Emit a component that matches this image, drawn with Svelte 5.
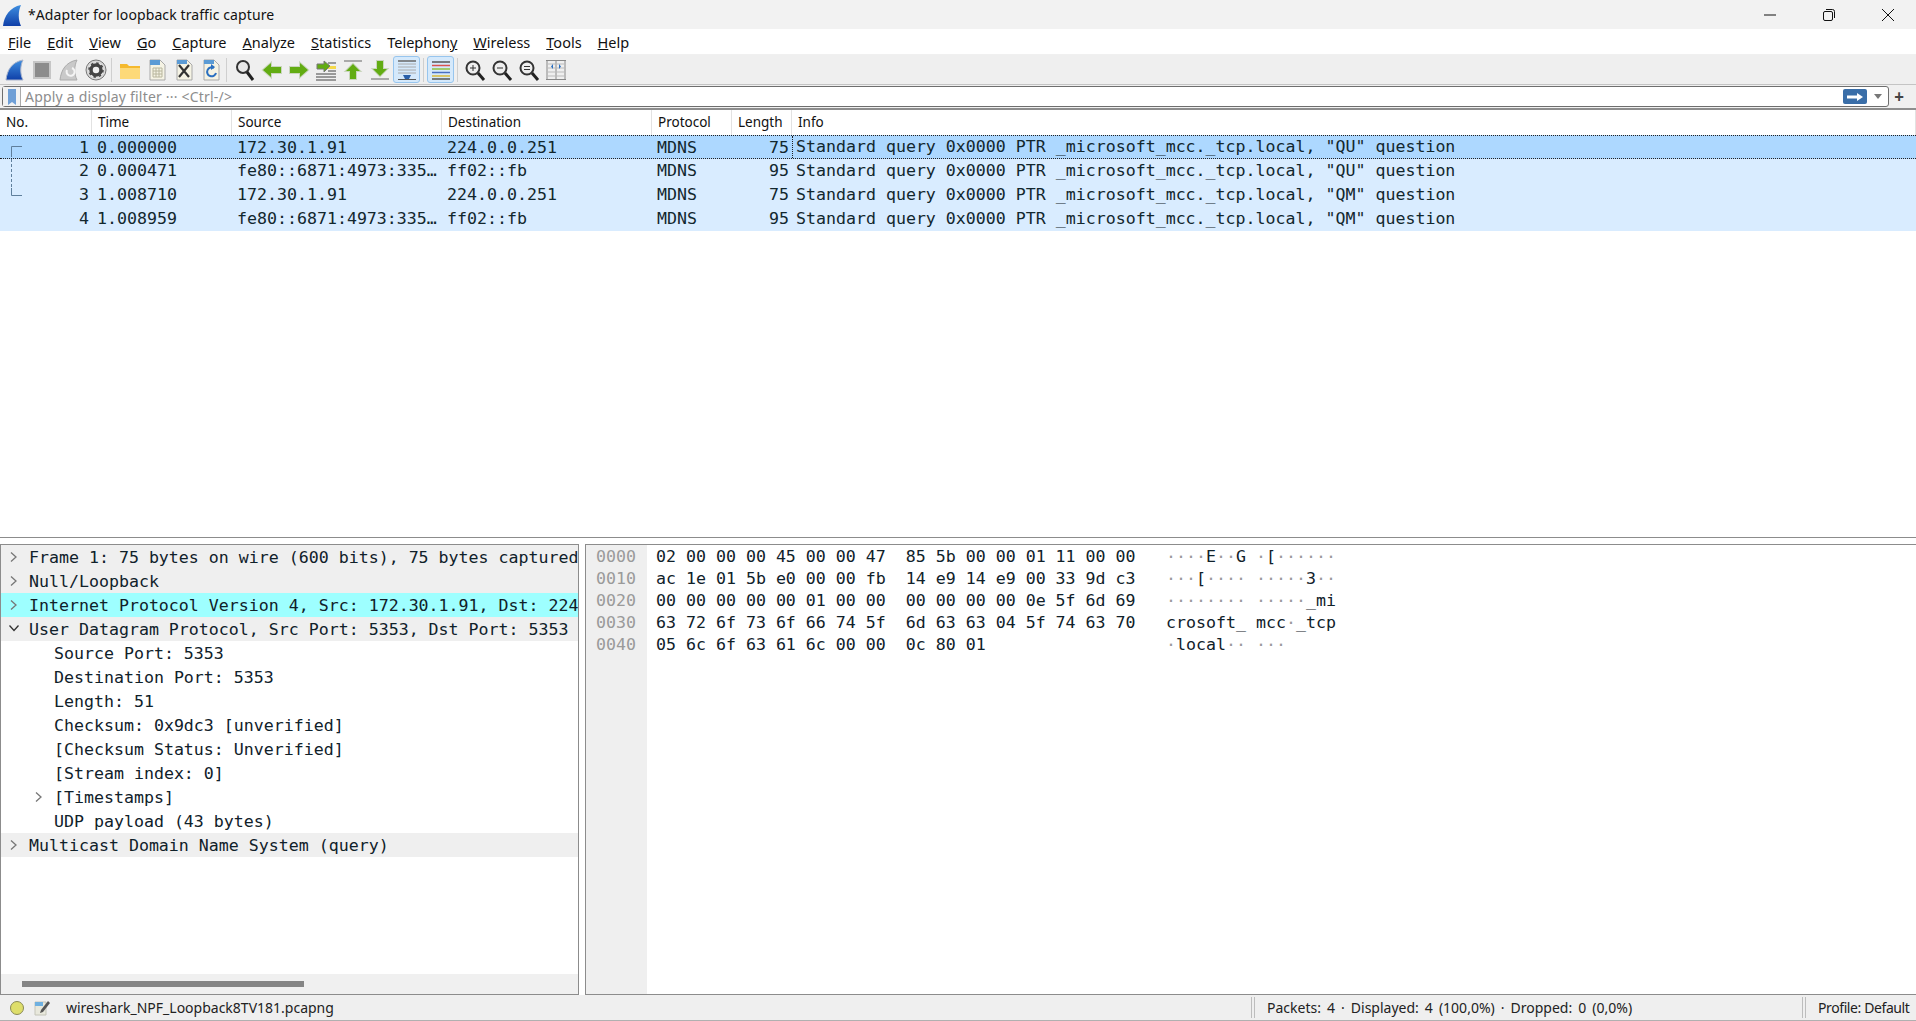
<script>
  const menus = [
    ["F", "ile"], ["E", "dit"], ["V", "iew"], ["G", "o"], ["C", "apture"], ["A", "nalyze"],
    ["S", "tatistics"], ["", "Telephon", "y"], ["W", "ireless"], ["T", "ools"], ["H", "elp"],
  ];

  const packets = [
    { no: 1, time: "0.000000", src: "172.30.1.91", dst: "224.0.0.251", len: 75, q: "QU" },
    { no: 2, time: "0.000471", src: "fe80::6871:4973:335…", dst: "ff02::fb", len: 95, q: "QU" },
    { no: 3, time: "1.008710", src: "172.30.1.91", dst: "224.0.0.251", len: 75, q: "QM" },
    { no: 4, time: "1.008959", src: "fe80::6871:4973:335…", dst: "ff02::fb", len: 95, q: "QM" },
  ];

  const tree = [
    { text: "Frame 1: 75 bytes on wire (600 bits), 75 bytes captured", top: true, arrow: "r" },
    { text: "Null/Loopback", top: true, arrow: "r" },
    { text: "Internet Protocol Version 4, Src: 172.30.1.91, Dst: 224", top: true, arrow: "r", hl: true },
    { text: "User Datagram Protocol, Src Port: 5353, Dst Port: 5353", top: true, arrow: "d" },
    { text: "Source Port: 5353" },
    { text: "Destination Port: 5353" },
    { text: "Length: 51" },
    { text: "Checksum: 0x9dc3 [unverified]" },
    { text: "[Checksum Status: Unverified]" },
    { text: "[Stream index: 0]" },
    { text: "[Timestamps]", arrow: "r" },
    { text: "UDP payload (43 bytes)" },
    { text: "Multicast Domain Name System (query)", top: true, arrow: "r" },
  ];

  const hex = [
    ["0000", "02 00 00 00 45 00 00 47  85 5b 00 00 01 11 00 00", "····E··G ·[······"],
    ["0010", "ac 1e 01 5b e0 00 00 fb  14 e9 14 e9 00 33 9d c3", "···[···· ·····3··"],
    ["0020", "00 00 00 00 00 01 00 00  00 00 00 00 0e 5f 6d 69", "········ ·····_mi"],
    ["0030", "63 72 6f 73 6f 66 74 5f  6d 63 63 04 5f 74 63 70", "crosoft_ mcc·_tcp"],
    ["0040", "05 6c 6f 63 61 6c 00 00  0c 80 01", "·local·· ···"],
  ];
</script>

<div class="window">
  <header class="titlebar">
    <svg class="app-icon" viewBox="0 0 20 24" width="20" height="24">
      <defs>
        <linearGradient id="fin" x1="0" y1="0" x2="0" y2="1">
          <stop offset="0" stop-color="#3f8fe0" />
          <stop offset="1" stop-color="#0f3fa8" />
        </linearGradient>
      </defs>
      <path d="M1 23C2 13 8 4 19 2c-3 6-3 15 0 21z" fill="url(#fin)" />
    </svg>
    <span class="title">*Adapter for loopback traffic capture</span>
    <div class="win-buttons">
      <svg viewBox="0 0 14 14" width="14" height="14"><path d="M1 7h12" stroke="#111" fill="none" /></svg>
      <svg viewBox="0 0 14 14" width="14" height="14">
        <rect x="1.500" y="3.500" width="9" height="9" rx="1.500" stroke="#111" fill="none" />
        <path d="M4 1.500h6.500a2 2 0 0 1 2 2V10" stroke="#111" fill="none" />
      </svg>
      <svg viewBox="0 0 14 14" width="14" height="14"><path d="M1 1l12 12M13 1L1 13" stroke="#111" fill="none" /></svg>
    </div>
  </header>

  <nav class="menubar">
    {#each menus as m}
      <span class="menu"><u>{m[0]}</u>{m[1]}{#if m[2]}<u>{m[2]}</u>{/if}</span>
    {/each}
  </nav>

  <div class="toolbar">
    <span class="tool"><svg viewBox="0 0 22 22"><path d="M2 21C3 11 8 3 19 1c-3 6-3 14 0 20z" fill="url(#fin)" stroke="#a9b4cc" /></svg></span>
    <span class="tool"><svg viewBox="0 0 22 22"><rect x="3" y="3" width="16" height="16" fill="#8c8c8c" stroke="#c6c6c6" stroke-width="2" /></svg></span>
    <span class="tool"><svg viewBox="0 0 22 22"><path d="M2 21C3 11 8 3 19 1c-3 6-3 14 0 20z" fill="#c9c9c9" stroke="#ababab" /><path d="M14 9a4 4 0 1 1-5 2" fill="none" stroke="#f4f4f4" stroke-width="2" /></svg></span>
    <span class="tool">
      <svg viewBox="0 0 22 22">
        <circle cx="11" cy="11" r="10" fill="#d8d8d8" stroke="#777" />
        <circle cx="11" cy="11" r="7.500" fill="#f0f0f0" />
        <circle cx="11" cy="11" r="5" fill="none" stroke="#444" stroke-width="3.500" />
        <circle cx="11" cy="11" r="7" fill="none" stroke="#444" stroke-width="1.500" stroke-dasharray="2.500 3" />
      </svg>
    </span>
    <span class="sep"></span>
    <span class="tool"><svg viewBox="0 0 22 22"><path d="M1 5h7l2 2h11v13H1z" fill="#f5b92d" /><path d="M1 9h20v11H1z" fill="#fdd978" /></svg></span>
    <span class="tool">
      <svg viewBox="0 0 22 22">
        <path d="M4 1h10l5 5v15H4z" fill="#f5f3e4" stroke="#a9a9a9" />
        <path d="M4 1h10v5H4z" fill="#5b9bd5" />
        <path d="M7 9h9v9H7zM7 12h9M7 15h9M10 9v9M13 9v9" fill="none" stroke="#b8b69d" />
      </svg>
    </span>
    <span class="tool">
      <svg viewBox="0 0 22 22">
        <path d="M4 1h10l5 5v15H4z" fill="#f5f3e4" stroke="#a9a9a9" />
        <path d="M4 1h10v4H4z" fill="#5b9bd5" />
        <path d="M6 6l10 12M16 6L6 18" stroke="#333" stroke-width="2.200" />
      </svg>
    </span>
    <span class="tool">
      <svg viewBox="0 0 22 22">
        <path d="M4 1h10l5 5v15H4z" fill="#f5f3e4" stroke="#a9a9a9" />
        <path d="M4 1h10v4H4z" fill="#5b9bd5" />
        <path d="M14 9a4.500 4.500 0 1 0 2 5" fill="none" stroke="#2a6fc0" stroke-width="2" />
        <path d="M11 5l4 3-4 3z" fill="#2a6fc0" />
      </svg>
    </span>
    <span class="sep"></span>
    <span class="tool"><svg viewBox="0 0 22 22"><circle cx="9" cy="8" r="6" fill="#e8e8e8" stroke="#333" stroke-width="2" /><path d="M13 13l6 8" stroke="#222" stroke-width="3" /></svg></span>
    <span class="tool"><svg viewBox="0 0 22 22"><path d="M2 11l8-7v4h10v6H10v4z" fill="#62ac12" stroke="#c9d6bc" stroke-width="2" paint-order="stroke" /></svg></span>
    <span class="tool"><svg viewBox="0 0 22 22"><path d="M20 11l-8-7v4H2v6h10v4z" fill="#62ac12" stroke="#c9d6bc" stroke-width="2" paint-order="stroke" /></svg></span>
    <span class="tool">
      <svg viewBox="0 0 22 22">
        <path d="M1 15h20M1 18h20M1 21h20M13 4h8M13 12h8" stroke="#444" />
        <path d="M13 7h8v3h-8z" fill="#f5d94a" />
        <path d="M15 7l-6-5v3H2v5h7v3z" fill="#62ac12" stroke="#777" />
      </svg>
    </span>
    <span class="tool">
      <svg viewBox="0 0 22 22"><path d="M2 2h18" stroke="#aaa" stroke-width="2" /><path d="M11 5l7 7h-4v8H8v-8H4z" fill="#62ac12" stroke="#c9d6bc" stroke-width="2" paint-order="stroke" /></svg>
    </span>
    <span class="tool">
      <svg viewBox="0 0 22 22"><path d="M2 20h18" stroke="#aaa" stroke-width="2" /><path d="M11 17l7-7h-4V2H8v8H4z" fill="#62ac12" stroke="#c9d6bc" stroke-width="2" paint-order="stroke" /></svg>
    </span>
    <span class="tool on">
      <svg viewBox="0 0 22 22">
        <path d="M2 2h18" stroke="#666" stroke-width="1.500" />
        <path d="M2 5h18M2 8h18M2 11h18M2 14h18" stroke="#aaa" />
        <path d="M2 20.500h18" stroke="#555" />
        <path d="M7 16h8l-2 4H9z" fill="#2a5fa8" />
      </svg>
    </span>
    <span class="sep narrow"></span>
    <span class="tool on">
      <svg viewBox="0 0 22 22">
        <path d="M2 3h18" stroke="#555" stroke-width="1.500" />
        <path d="M2 6.500h18" stroke="#d9534f" stroke-width="1.500" />
        <path d="M2 10h18" stroke="#8fbf3f" stroke-width="1.500" />
        <path d="M2 13.500h18" stroke="#4a6fc0" stroke-width="1.500" />
        <path d="M2 17h18" stroke="#d8b83a" stroke-width="1.500" />
        <path d="M2 20h18" stroke="#555" stroke-width="1.500" />
      </svg>
    </span>
    <span class="sep narrow"></span>
    <span class="tool"><svg viewBox="0 0 22 22"><circle cx="9" cy="9" r="6.500" fill="#eee" stroke="#333" stroke-width="2" /><path d="M14 14l6 7" stroke="#222" stroke-width="3" /><path d="M6 9h6M9 6v6" stroke="#333" /></svg></span>
    <span class="tool"><svg viewBox="0 0 22 22"><circle cx="9" cy="9" r="6.500" fill="#eee" stroke="#333" stroke-width="2" /><path d="M14 14l6 7" stroke="#222" stroke-width="3" /><path d="M6 9h6" stroke="#333" /></svg></span>
    <span class="tool"><svg viewBox="0 0 22 22"><circle cx="9" cy="9" r="6.500" fill="#eee" stroke="#333" stroke-width="2" /><path d="M14 14l6 7" stroke="#222" stroke-width="3" /><path d="M6 7.500h6M6 10.500h6" stroke="#333" /></svg></span>
    <span class="tool">
      <svg viewBox="0 0 22 22">
        <path d="M1 1.500h20M1 20.500h20M2 1v20M20 1v20M11 1v20" stroke="#888" />
        <path d="M1 5h20M1 9h20M1 13h20M1 17h20" stroke="#bbb" />
        <path d="M8 5v5l-2-2.500zM14 5v5l2-2.500z" fill="#2a6fc0" />
      </svg>
    </span>
  </div>

  <div class="filterbar">
    <div class="filter">
      <span class="bookmark">
        <svg viewBox="0 0 10 16" width="10" height="16"><path d="M1 0h8v16l-4-3-4 3z" fill="#6f9fd6" /></svg>
      </span>
      <span class="placeholder">Apply a display filter ··· &lt;Ctrl-/&gt;</span>
      <span class="go">
        <svg viewBox="0 0 24 14" width="24" height="14"><path d="M4 5.500h10V3l6 4-6 4V8.500H4z" fill="#fff" /></svg>
      </span>
      <span class="caret"></span>
    </div>
    <span class="plus">+</span>
  </div>

  <section class="packets">
    <div class="cols head">
      <span>No.</span><span>Time</span><span>Source</span><span>Destination</span><span>Protocol</span><span>Length</span><span>Info</span>
    </div>
    <div class="rows">
      {#each packets as p, i}
        <div class="cols row" class:sel={i === 0}>
          <span class="num">{p.no}</span>
          <span>{p.time}</span>
          <span>{p.src}</span>
          <span>{p.dst}</span>
          <span>MDNS</span>
          <span class="num">{p.len}</span>
          <span class="info">Standard query 0x0000 PTR _microsoft_mcc._tcp.local, "{p.q}" question</span>
        </div>
      {/each}
      <svg class="related" viewBox="0 0 12 50" width="12" height="50">
        <path d="M11 .5H.5V8M.5 42v7.500H11" fill="none" stroke="#5f7f9c" />
        <path d="M.5 8v34" fill="none" stroke="#5f7f9c" stroke-dasharray="3 2" />
      </svg>
    </div>
  </section>

  <div class="panes">
    <section class="details">
      <div class="tree">
        {#each tree as n}
          <div class="node" class:top={n.top} class:hl={n.hl}>
            <span class="arrow">
              {#if n.arrow === "r"}
                <svg viewBox="0 0 10 12" width="10" height="12"><path d="M3 1.500L8 6l-5 4.500" fill="none" stroke="#777" stroke-width="1.300" /></svg>
              {:else if n.arrow === "d"}
                <svg viewBox="0 0 12 10" width="12" height="10"><path d="M1.500 2.500L6 7.500l4.500-5" fill="none" stroke="#333" stroke-width="1.300" /></svg>
              {/if}
            </span>
            <span class="label">{n.text}</span>
          </div>
        {/each}
      </div>
      <div class="hscroll"><div class="thumb"></div></div>
    </section>

    <section class="bytes">
      <div class="offsets">
        {#each hex as h}<div class="line">{h[0]}</div>{/each}
      </div>
      <div class="dump">
        {#each hex as h}
          <div class="line">
            <span class="hexpart">{h[1]}</span><span class="ascii">{#each h[2].split("") as c}{#if c === "·"}<i>·</i>{:else}{c}{/if}{/each}</span>
          </div>
        {/each}
      </div>
    </section>
  </div>

  <footer class="status">
    <svg class="led" viewBox="0 0 16 16" width="16" height="16"><circle cx="8" cy="8" r="6.500" fill="#dede6a" stroke="#8a8a55" /></svg>
    <svg class="note" viewBox="0 0 16 16" width="16" height="16">
      <path d="M1 2h11v13H1z" fill="#e8e8dc" stroke="#c4c4b8" />
      <path d="M1 2h8v4H1z" fill="#6fb0e0" />
      <path d="M14 1L7 10l-1 3 3-1 7-9z" fill="#555" />
    </svg>
    <span class="file">wireshark_NPF_Loopback8TV181.pcapng</span>
    <span class="grip first"></span>
    <span class="stats">Packets: 4 · Displayed: 4 (100,0%) · Dropped: 0 (0,0%)</span>
    <span class="grip"></span>
    <span class="profile">Profile: Default</span>
  </footer>
</div>

<style>
  :global(body) {
    margin: 0;
    background: #fff;
  }

  .window {
    width: 1916px;
    height: 1021px;
    display: flex;
    flex-direction: column;
    overflow: hidden;
    font-family: "Noto Sans", "Liberation Sans", sans-serif;
    color: #111;
  }

  .titlebar {
    height: 29px;
    flex: none;
    display: flex;
    align-items: center;
    background: #f2f2f2;
    padding-left: 2px;
    font-size: 14px;
  }

  .title {
    margin-left: 6px;
    letter-spacing: 0.1px;
  }

  .win-buttons {
    margin-left: auto;
    display: flex;
    gap: 45px;
    padding-right: 21px;
  }

  .menubar {
    height: 25px;
    flex: none;
    display: flex;
    align-items: center;
    gap: 16px;
    padding-left: 8px;
    background: #fff;
    border-bottom: 1px solid #f0f0f0;
    font-size: 14.5px;
  }

  .toolbar {
    height: 29px;
    flex: none;
    display: flex;
    align-items: center;
    padding-left: 1px;
    background: #efefef;
    border-bottom: 1px solid #c4c4c4;
  }

  .tool {
    width: 27px;
    height: 27px;
    flex: none;
    display: flex;
    align-items: center;
    justify-content: center;
    box-sizing: border-box;
  }

  .tool svg {
    width: 22px;
    height: 22px;
  }

  .tool.on {
    background: #d5e9fb;
    border: 1px solid #97c5ee;
    border-radius: 3px;
  }

  .sep {
    width: 1px;
    height: 24px;
    background: #cfcfcf;
    margin: 0 4px 0 2px;
    flex: none;
  }

  .sep.narrow {
    margin: 0 3px;
  }

  .filterbar {
    height: 23px;
    flex: none;
    display: flex;
    align-items: center;
    background: #f0f0f0;
    padding: 0 0 0 2px;
    border-bottom: 2px solid #8e8e8e;
  }

  .filter {
    width: 1885px;
    height: 19px;
    display: flex;
    align-items: center;
    background: #fff;
    border: 1px solid #6e6e6e;
    border-radius: 3px;
    font-size: 14px;
  }

  .bookmark {
    width: 17px;
    height: 19px;
    display: flex;
    align-items: center;
    justify-content: center;
    border-right: 1px solid #aaa;
    background: #f2f2f2;
    flex: none;
  }

  .placeholder {
    margin-left: 4px;
    color: #8d8d8d;
    letter-spacing: 0.2px;
  }

  .go {
    margin-left: auto;
    width: 24px;
    height: 15px;
    display: flex;
    align-items: center;
    background: #3a6ea8;
    border-radius: 2px;
  }

  .caret {
    width: 0;
    height: 0;
    margin: 0 6px 0 7px;
    border-left: 4px solid transparent;
    border-right: 4px solid transparent;
    border-top: 5px solid #777;
  }

  .plus {
    width: 22px;
    text-align: center;
    font-size: 17px;
    font-weight: 700;
    line-height: 1;
    color: #444;
    margin-left: -1px;
  }

  .packets {
    height: 427px;
    flex: none;
    background: #fff;
    border-bottom: 1px solid #8c8c8c;
    font-family: "DejaVu Sans Mono", monospace;
    font-size: 16.6px;
  }

  .cols {
    display: grid;
    grid-template-columns: 92px 140px 210px 210px 80px 60px 1fr;
    align-items: center;
    white-space: nowrap;
  }

  .head {
    height: 25px;
    font-family: "Noto Sans", sans-serif;
    font-size: 13.5px;
  }

  .head span {
    height: 25px;
    line-height: 25px;
    padding-left: 6px;
    border-right: 1px solid #e2e2e2;
    box-sizing: border-box;
  }

  .rows {
    position: relative;
  }

  .row {
    height: 24px;
    box-sizing: border-box;
    padding-bottom: 1px;
    background: #d9ecff;
    color: #12272e;
  }

  .row.sel {
    background: #add8ff;
    padding-bottom: 0;
    border-top: 1px dotted #222;
    border-bottom: 1px dotted #222;
  }

  .row span {
    padding-left: 5px;
    overflow: hidden;
  }

  .row .num {
    padding: 0 3px 0 0;
    text-align: right;
  }

  .row .info {
    padding-left: 4px;
  }

  .row.sel .info {
    height: 22px;
    line-height: 22px;
    border-left: 1px dotted #222;
    padding-left: 3px;
  }

  .related {
    position: absolute;
    left: 11px;
    top: 11px;
  }

  .panes {
    flex: 1;
    min-height: 0;
    display: flex;
    gap: 6px;
    padding-top: 6px;
    font-family: "DejaVu Sans Mono", monospace;
    font-size: 16.6px;
  }

  .details {
    width: 579px;
    box-sizing: border-box;
    flex: none;
    display: flex;
    flex-direction: column;
    border: 1px solid #8c8c8c;
  }

  .tree {
    flex: 1;
    min-height: 0;
    overflow: hidden;
  }

  .node {
    height: 24px;
    display: flex;
    align-items: center;
    white-space: nowrap;
    padding-left: 25px;
    position: relative;
    color: #10212a;
  }

  .node.top {
    background: #efefef;
  }

  .node.hl {
    background: #9effff;
  }

  .arrow {
    position: absolute;
    left: 7px;
    top: 6px;
    display: flex;
  }

  .node:not(.top) .arrow {
    left: 32px;
  }

  .label {
    padding-left: 3px;
  }

  .node:not(.top) .label {
    padding-left: 28px;
  }

  .hscroll {
    height: 20px;
    flex: none;
    display: flex;
    align-items: center;
    background: #f0f0f0;
    padding-left: 21px;
  }

  .thumb {
    width: 282px;
    height: 6px;
    background: #858585;
  }

  .bytes {
    flex: 1;
    min-width: 0;
    display: flex;
    border: 1px solid #8c8c8c;
    border-right: none;
    white-space: pre;
  }

  .offsets {
    width: 61px;
    box-sizing: border-box;
    background: #efefef;
    color: #9a9a9a;
    padding: 1px 0 0 10px;
    flex: none;
  }

  .dump {
    padding: 1px 0 0 9px;
    color: #10212a;
  }

  .line {
    height: 22px;
    line-height: 22px;
  }

  .hexpart {
    display: inline-block;
    width: 510px;
  }

  .ascii i {
    font-style: normal;
    color: #9a9a9a;
  }

  .status {
    height: 25px;
    flex: none;
    display: flex;
    align-items: center;
    background: #efefef;
    border-bottom: 1px solid #b0b0b0;
    font-size: 14px;
    color: #222;
  }

  .led {
    margin-left: 9px;
    flex: none;
  }

  .note {
    margin-left: 9px;
    flex: none;
  }

  .file {
    margin-left: 16px;
    width: 268px;
    white-space: nowrap;
  }

  .grip {
    width: 2px;
    height: 21px;
    border-left: 1px solid #bdbdbd;
    border-right: 1px solid #bdbdbd;
    margin-left: 0;
    flex: none;
  }

  .grip.first {
    margin-left: 917px;
  }

  .stats {
    margin-left: 12px;
    width: 535px;
    white-space: nowrap;
    word-spacing: 2.400px;
  }

  .profile {
    margin-left: 12px;
    white-space: nowrap;
    letter-spacing: -0.400px;
  }
</style>
